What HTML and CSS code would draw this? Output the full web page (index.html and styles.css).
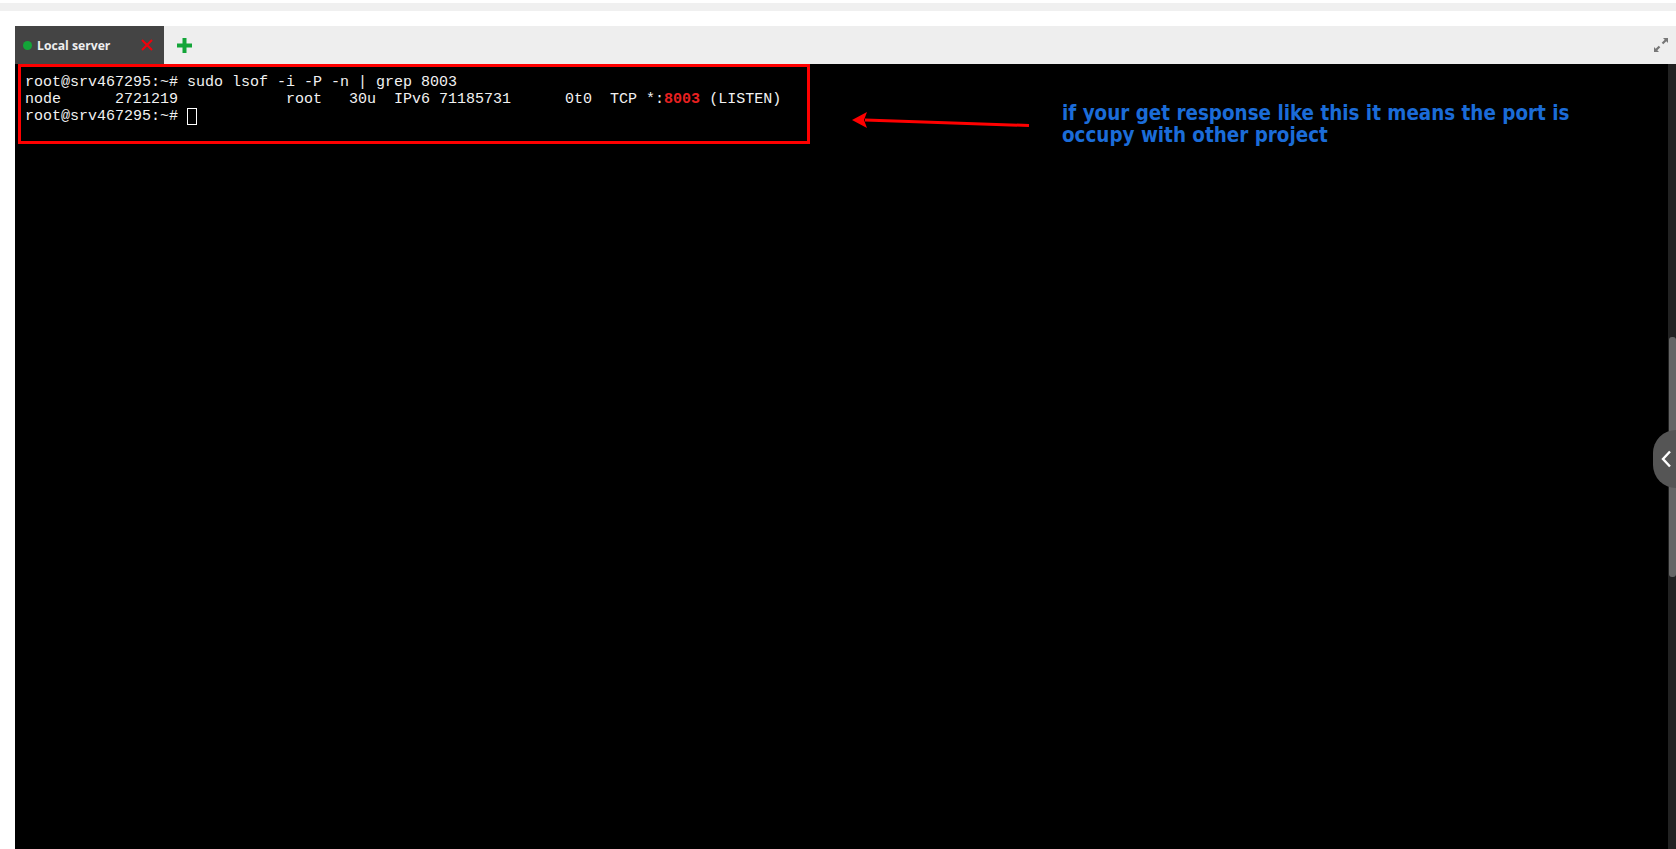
FILE: index.html
```html
<!DOCTYPE html>
<html lang="en">
<head>
<meta charset="utf-8">
<title>Local server</title>
<link rel="stylesheet" href="styles.css">
</head>
<body>
<div class="top-strip"></div>
<main class="panel">
  <div class="tabbar">
    <div class="tab">
      <span class="dot"></span>
      <span class="tab-label">Local server</span>
      <svg class="close" viewBox="0 0 12 12" width="12" height="12"><path d="M1 1L11 11M11 1L1 11" stroke="#f0000a" stroke-width="2" fill="none"/></svg>
    </div>
    <svg class="add" viewBox="0 0 15 15" width="15" height="15"><path d="M7.5 0V15M0 7.5H15" stroke="#13a538" stroke-width="4" fill="none"/></svg>
    <svg class="expand" viewBox="0 0 16 16" width="16" height="16"><path d="M10 1H15V6L13.3 4.3L10.3 7.3L8.7 5.7L11.7 2.7ZM6 15H1V10L2.7 11.7L5.7 8.7L7.3 10.3L4.3 13.3Z" fill="#777"/></svg>
  </div>
  <div class="terminal">
    <div class="screen">
      <pre class="output">root@srv467295:~# sudo lsof -i -P -n | grep 8003
node      2721219            root   30u  IPv6 71185731      0t0  TCP *:<b class="match">8003</b> (LISTEN)
root@srv467295:~# <span class="cursor"></span></pre>
    </div>
    <div class="note">
      <svg class="arrow" viewBox="0 0 180 18" width="180" height="18"><path d="M178 14.5L14 9" stroke="#f00" stroke-width="3" fill="none"/><path d="M1 9L16 1L13 9L16 17Z" fill="#f00"/></svg>
      <p class="note-text">if your get response like this it means the port is occupy with other project</p>
    </div>
    <div class="scrollbar"><div class="thumb"></div></div>
    <div class="handle">
      <svg viewBox="0 0 12 18" width="12" height="18"><path d="M10 1.5L3 9L10 16.5" stroke="#fff" stroke-width="2.4" fill="none"/></svg>
    </div>
  </div>
</main>
</body>
</html>
```
FILE: styles.css
```css
html, body {
  margin: 0;
  height: 100%;
  overflow: hidden;
  background: #fff;
}
.top-strip {
  height: 8px;
  margin-top: 3px;
  background: #f0f0f0;
}
.panel {
  margin: 15px 0 0 15px;
  height: 823px;
  display: flex;
  flex-direction: column;
}
.tabbar {
  height: 38px;
  flex: none;
  display: flex;
  align-items: center;
  background: #eeeeee;
  padding-right: 7px;
}
.tab {
  width: 149px;
  height: 38px;
  box-sizing: border-box;
  padding: 0 11px 0 8px;
  background: #444444;
  display: flex;
  align-items: center;
}
.dot {
  width: 9px;
  height: 9px;
  border-radius: 50%;
  background: #13a538;
  margin-right: 5px;
}
.tab-label {
  flex: 1;
  font: 700 12.2px "Open Sans", "Noto Sans", sans-serif;
  color: #eeeeee;
}
.add {
  margin-left: 13px;
}
.expand {
  margin-left: auto;
}
.terminal {
  position: relative;
  flex: 1;
  background: #000;
  display: flex;
  align-items: flex-start;
}
.screen {
  box-sizing: border-box;
  width: 792px;
  height: 80px;
  flex: none;
  margin: 0 0 0 3px;
  padding: 7px 0 0 4px;
  border: 3px solid #f00;
}
.output {
  margin: 0;
  font: 15px/17px "Liberation Mono", monospace;
  color: #f2f2f2;
}
.match {
  color: #e92020;
}
.cursor {
  display: inline-block;
  box-sizing: border-box;
  width: 10px;
  height: 17px;
  border: 1px solid #fff;
  vertical-align: -5px;
}
.note {
  display: flex;
  align-items: flex-start;
  margin: 0 0 0 41px;
}
.arrow {
  margin: 47px 0 0 0;
  flex: none;
}
.note-text {
  width: 530px;
  margin: 38px 0 0 31px;
  font: 700 20.4px/22px "DejaVu Sans", sans-serif;
  font-stretch: condensed;
  color: #1b6cd8;
}
.scrollbar {
  position: absolute;
  right: 0;
  top: 0;
  bottom: 0;
  width: 8px;
  background: #222;
}
.thumb {
  margin: 273px 0 0 1px;
  height: 240px;
  background: #666;
  border-radius: 3px;
}
.handle {
  position: absolute;
  right: 0;
  top: 366px;
  width: 23px;
  height: 58px;
  box-sizing: border-box;
  padding-right: 4px;
  border-radius: 29px 0 0 29px;
  background: #555;
  display: flex;
  align-items: center;
  justify-content: flex-end;
}
```
